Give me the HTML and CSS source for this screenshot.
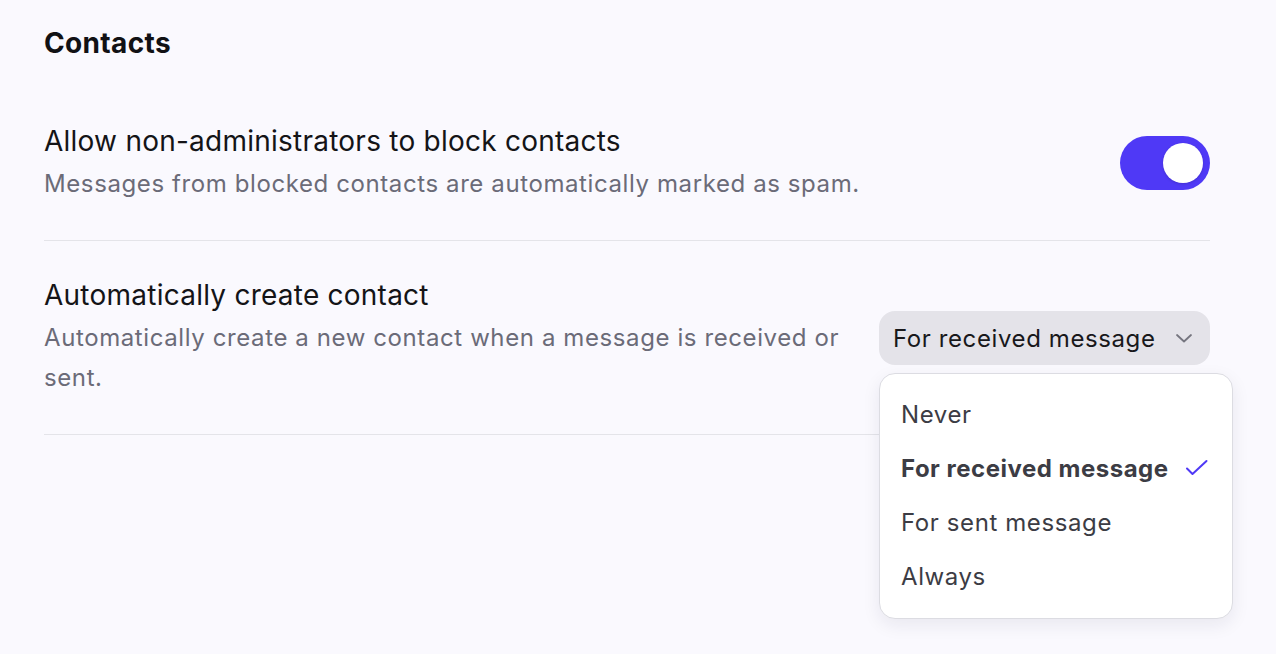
FILE: index.html
```html
<!DOCTYPE html>
<html lang="en">
<head>
<meta charset="utf-8">
<title>Contacts</title>
<link rel="stylesheet" href="styles.css">
</head>
<body>
<main class="page">
  <h2 class="heading">Contacts</h2>
  <div class="list">
    <div class="row">
      <div class="text">
        <div class="title">Allow non-administrators to block contacts</div>
        <div class="desc">Messages from blocked contacts are automatically marked as spam.</div>
      </div>
      <button class="toggle" aria-pressed="true"><span class="knob"></span></button>
    </div>
    <div class="row">
      <div class="text narrow">
        <div class="title">Automatically create contact</div>
        <div class="desc">Automatically create a new contact when a message is received or sent.</div>
      </div>
      <div class="select-wrap">
        <button class="select">
          <span>For received message</span>
          <svg class="chev" width="18" height="10" viewBox="0 0 18 10" fill="none"><path d="M2 2l7 6.5L16 2" stroke="#75757f" stroke-width="1.8" stroke-linecap="round" stroke-linejoin="round"/></svg>
        </button>
        <ul class="menu">
          <li class="item">Never</li>
          <li class="item selected">For received message
            <svg class="check" width="24" height="18" viewBox="0 0 24 18" fill="none"><path d="M2 9.5l5.5 5.5L21.5 2" stroke="#4f39f6" stroke-width="2" stroke-linecap="round" stroke-linejoin="round"/></svg>
          </li>
          <li class="item">For sent message</li>
          <li class="item">Always</li>
        </ul>
      </div>
    </div>
  </div>
</main>
</body>
</html>
```
FILE: styles.css
```css
* { box-sizing: border-box; }
html, body { margin: 0; padding: 0; }
body {
  background: #faf9fe;
  font-family: Inter, "Noto Sans", "Liberation Sans", sans-serif;
  color: #18181b;
  width: 1276px;
  height: 654px;
  overflow: hidden;
}
.page {
  padding: 25px 66px 0 44px;
}
.heading {
  margin: 0 0 26px;
  font-size: 28px;
  line-height: 36px;
  font-weight: 700;
  color: #111114;
  letter-spacing: 0.35px;
}
.row {
  display: flex;
  align-items: center;
  justify-content: space-between;
  padding: 31px 0 36px;
  border-bottom: 1px solid #e4e4e9;
}
.text { flex: 0 1 auto; }
.text.narrow { max-width: 810px; }
.title {
  font-size: 28px;
  line-height: 46px;
  color: #141417;
  letter-spacing: 0.24px;
}
.desc {
  font-size: 24px;
  line-height: 40px;
  color: #6b6b78;
  letter-spacing: 0.6px;
}
.toggle {
  flex: none;
  width: 90px;
  height: 54px;
  border: none;
  border-radius: 27px;
  background: #4f39f6;
  display: flex;
  align-items: center;
  justify-content: flex-end;
  padding: 0 7px 0 0;
  margin-top: 4px;
}
.knob {
  width: 40px;
  height: 40px;
  border-radius: 50%;
  background: #fff;
  box-shadow: 0 1px 3px rgba(0,0,0,0.15);
}
.select-wrap {
  position: relative;
  flex: none;
}
.select {
  width: 331px;
  height: 54px;
  border: none;
  border-radius: 16px;
  background: #e4e3e9;
  display: flex;
  align-items: center;
  justify-content: space-between;
  padding: 0 17px 0 14px;
  font-family: inherit;
  font-size: 24px;
  color: #18181b;
  margin-top: 6px;
  letter-spacing: 0.6px;
}
.chev { display: block; }
.menu {
  position: absolute;
  left: 0;
  top: 68px;
  width: 354px;
  margin: 0;
  padding: 13px 0 15px;
  list-style: none;
  background: #fff;
  border: 1px solid #dcdce2;
  border-radius: 16px;
  box-shadow: 0 6px 18px rgba(30, 30, 60, 0.08);
  z-index: 5;
}
.item {
  height: 54px;
  display: flex;
  align-items: center;
  justify-content: space-between;
  padding: 0 23px 0 21px;
  font-size: 24px;
  color: #3c3c44;
  letter-spacing: 0.6px;
}
.item.selected {
  font-weight: 700;
  letter-spacing: 0.5px;
}
.check { display: block; }
```
